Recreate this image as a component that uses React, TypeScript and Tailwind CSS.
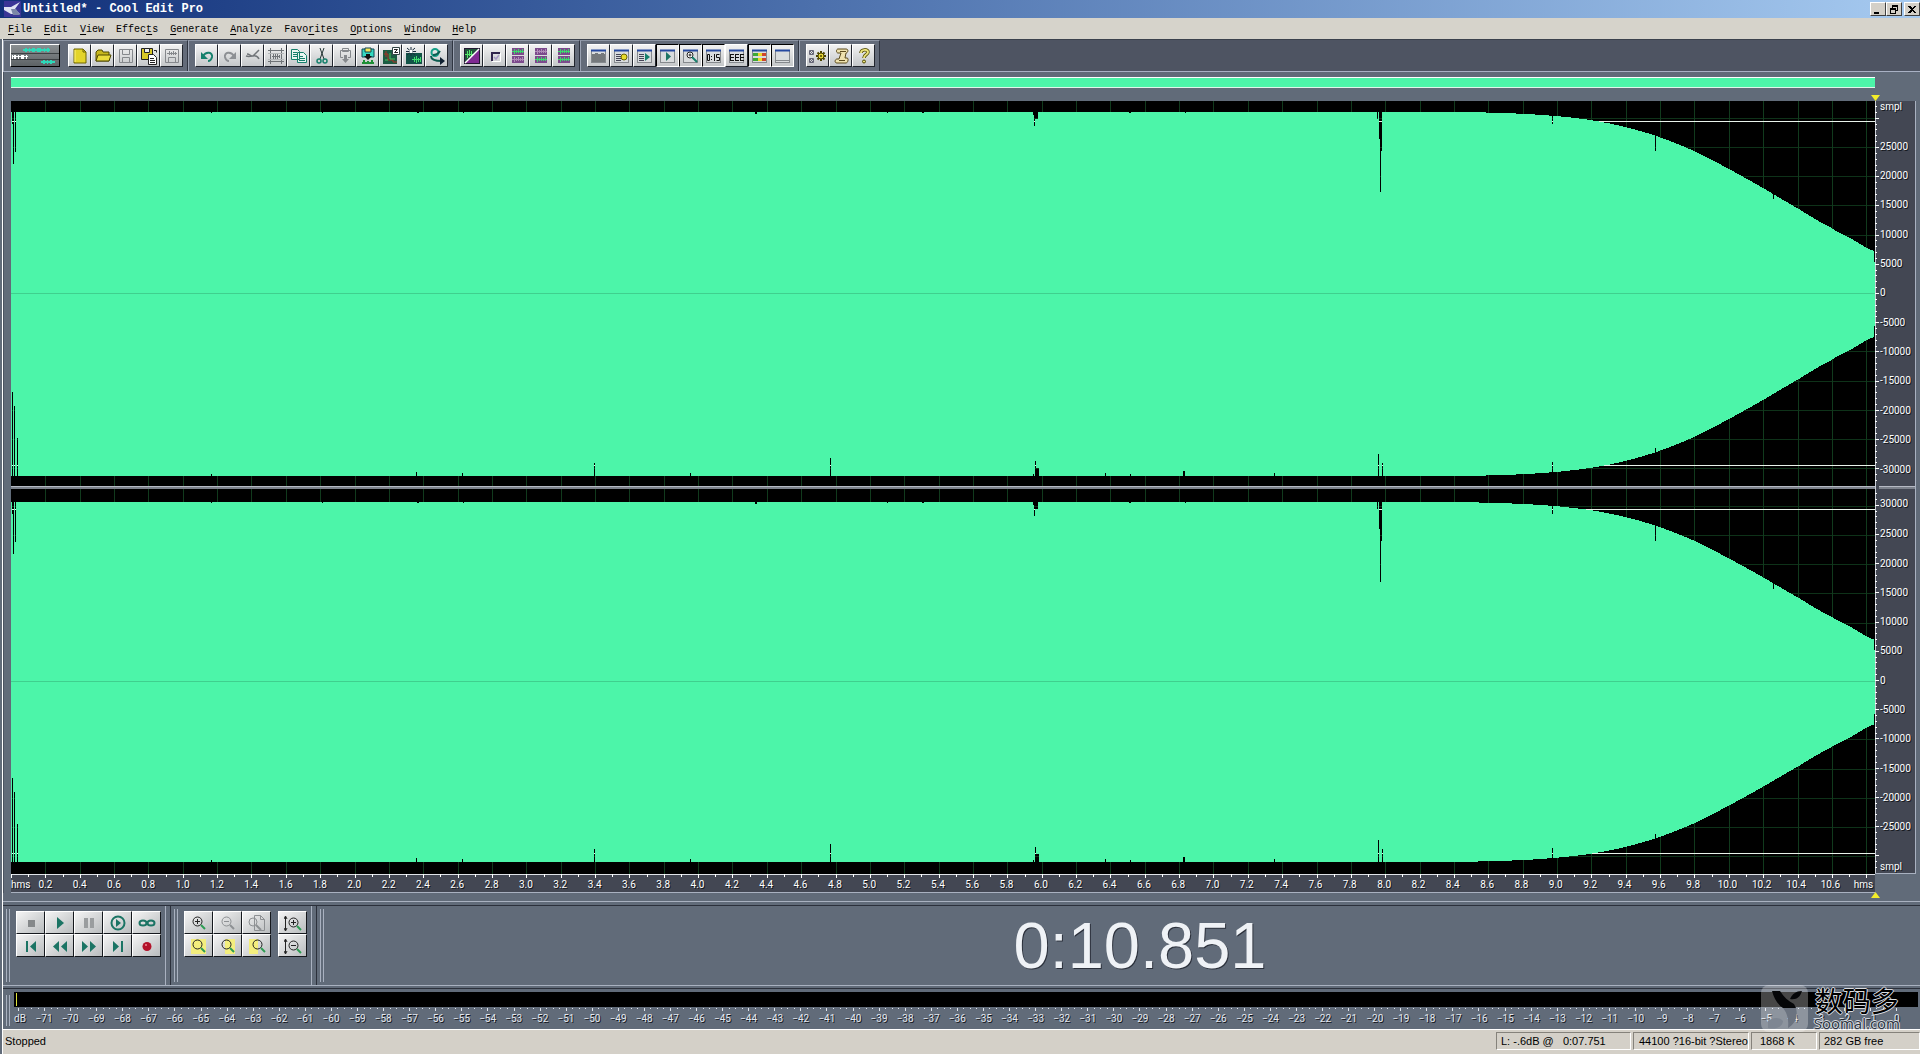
import type { ReactNode } from "react";
import clsx from "clsx";

const DURATION = 10.851;
const PLOT_W = 1864;
const PLOT_H = 773;
const PX_PER_SAMPLE = 29.2 / 5000;
const GREEN = "#4cf5a9";

const menus = [
  ["", "F", "ile"],
  ["", "E", "dit"],
  ["", "V", "iew"],
  ["Effec", "t", "s"],
  ["", "G", "enerate"],
  ["", "A", "nalyze"],
  ["Favo", "r", "ites"],
  ["", "O", "ptions"],
  ["", "W", "indow"],
  ["", "H", "elp"],
];

const Icon = ({ children }: { children: ReactNode }) => (
  <svg width="18" height="18" viewBox="0 0 18 18" fill="none" aria-hidden="true" className="shrink-0">
    {children}
  </svg>
);

/* ---------- toolbar icons ---------- */

const wave = (y: number, color: string) => (
  <path
    d={`M3 ${y}.5h12M5.5 ${y - 2}v5M7.5 ${y - 1}v3M9.5 ${y - 2}v4M11.5 ${y - 1}v3M13.5 ${y - 2}v4`}
    stroke={color}
  />
);

const pane = (
  <>
    <rect x="1.5" y="3.5" width="14" height="12" fill="#d9dcde" stroke="#85898d" />
    <path d="M1 3.5h15" stroke="#2448a0" strokeWidth="2" />
  </>
);

const splitWave = (top: string, bottom: string) => (
  <Icon>
    <rect x="3" y="1" width="12" height="7" fill="#7c4a8c" />
    <rect x="3" y="9" width="12" height="7" fill="#7c4a8c" />
    {wave(4, top)}
    {wave(12, bottom)}
  </Icon>
);

const icons: Record<string, ReactNode> = {
  "New": (
    <Icon>
      <path d="M3 2h9l3 3v11H3z" fill="#e3d42a" stroke="#6d6400" />
      <path d="M12 2v3h3" stroke="#6d6400" />
      <path d="M4 3v12" stroke="#fff27a" />
    </Icon>
  ),
  "Open": (
    <Icon>
      <path d="M2 14V5l2-2h4l1 2h6v9z" fill="#c8b81e" stroke="#4f4800" />
      <path d="M2 14l2-6h13l-2 6z" fill="#eadc3c" stroke="#4f4800" />
    </Icon>
  ),
  "Save": (
    <Icon>
      <path d="M2.500 2.500h13v13h-13z M5.500 2.500v5h7v-5 M5.500 15.500v-5h7v5" stroke="#85888c" />
    </Icon>
  ),
  "Save As": (
    <Icon>
      <path d="M1.500 1.500h11v11h-11z" fill="#d8c826" stroke="#222" />
      <path d="M4.500 1.500h5v4h-5z" fill="#eee" stroke="#222" />
      <path d="M8.500 7.500h5l3 3v7h-8z" fill="#fff" stroke="#222" />
      <path d="M10 11.500h4M10 13.500h5M10 15.500h5M14 3.500h2.500v2" stroke="#222" />
    </Icon>
  ),
  "Save Selection": (
    <Icon>
      <path d="M2.500 2.500h13v13h-13z M5.500 15.500v-5h7v5 M4 6.500h10 M6.500 4v4 M8.500 5v3 M10.500 4v4 M12.500 5v3" stroke="#85888c" />
    </Icon>
  ),
  "Undo": (
    <Icon>
      <path d="M5 9c3-5 10-4 9 1-.5 2-2 4-4 4" stroke="#16806c" strokeWidth="2" />
      <path d="M3 5v7h7z" fill="#16806c" />
    </Icon>
  ),
  "Redo": (
    <Icon>
      <path d="M13 9C10 4 3 5 4 10c.5 2 2 4 4 4" stroke="#8d9094" strokeWidth="2" />
      <path d="M15 5v7H8z" fill="#8d9094" />
    </Icon>
  ),
  "Repeat": (
    <Icon>
      <path d="M15 3L9 9c-3 0-3-2-6-2M9 9c3-1 5 1 6 3M2 9c3 1 4 0 7 0" stroke="#707478" strokeWidth="1.500" />
    </Icon>
  ),
  "Trim": (
    <Icon>
      <path d="M1 3.500h16M1 14.500h16M3.500 1v16M14.500 1v16M5 9.500h8M6.500 7v5M8.500 6v6M10.500 7v5M12.500 8v3" stroke="#6f7377" />
      <path d="M1 6.500h16M1 12.500h16" stroke="#b4b7b9" />
    </Icon>
  ),
  "Copy": (
    <Icon>
      <path d="M1.500 2.500h6l2 2v8h-8z M7.500 5.500h6l3 3v7h-9z" fill="#eaf6f2" stroke="#16806c" />
      <path d="M3 5.500h4M3 7.500h4M3 9.500h4M9 9.500h4M9 11.500h6M9 13.500h6" stroke="#16806c" />
    </Icon>
  ),
  "Cut": (
    <Icon>
      <path d="M7 1l4 11M11 1L7 12" stroke="#233" />
      <circle cx="6" cy="14" r="2" stroke="#16806c" strokeWidth="1.500" />
      <circle cx="12" cy="14" r="2" stroke="#16806c" strokeWidth="1.500" />
    </Icon>
  ),
  "Paste": (
    <Icon>
      <path d="M7 10.500H4.500v-7h10v7H12 M6.500 1.500h6v3h-6z" stroke="#85888c" />
      <path d="M8 8h3v4h2l-3.500 4L6 12h2z" fill="#85888c" />
    </Icon>
  ),
  "Paste to New": (
    <Icon>
      <path d="M3 2h12v8H3z" fill="#35d8c0" stroke="#145" />
      <path d="M6 1h6v4H6z" fill="#f3e657" stroke="#145" />
      <path d="M7 7h4v2h2l-4 4-4-4h2z" fill="#111" />
      <path d="M3 16h12M5 13v3M13 13v3M9 14v2" stroke="#1d8f35" strokeWidth="2" />
    </Icon>
  ),
  "Mix Paste": (
    <Icon>
      <rect x="1" y="3" width="14" height="14" fill="#1b5c43" />
      <path d="M2 7h4v6h5v2h4M4 4v6" stroke="#a73526" />
      <path d="M3 13h3M8 6v6h5" stroke="#46c35a" />
      <path d="M10.500.500h7v7h-7z" fill="#fff" stroke="#344" />
      <path d="M12 2.500h3.500l-3 3H16" stroke="#222" />
    </Icon>
  ),
  "Delete Silence": (
    <Icon>
      <rect x="1" y="6" width="16" height="11" fill="#125448" />
      <path d="M7 12.500h9M9.500 10v5M11.500 9v7M13.500 11v4M15.500 10v5" stroke="#3fe06d" />
      <path d="M6 0v9M1 4.500h10M2 1l8 7M10 1L2 8" stroke="#1b2d3c" />
      <path d="M4.500 4.500h3" stroke="#fff" strokeWidth="3" />
    </Icon>
  ),
  "Convert Sample Type": (
    <Icon>
      <circle cx="7" cy="5.500" r="3.500" stroke="#16a088" strokeWidth="2" />
      <path d="M5 8c3 0 5-1 7-4M3 9c0 3 3 5 11 5" stroke="#0d5c50" strokeWidth="2" />
      <path d="M12 10l5 4-5 4z" fill="#123" />
    </Icon>
  ),
  "Multitrack": (
    <Icon>
      <rect x="1.500" y="1.500" width="15" height="15" fill="#7f2a92" stroke="#231833" />
      <path d="M2 16V2h14z" fill="#20533a" />
      <path d="M2 7.500h9M4.500 4v7M6.500 3v6M8.500 4v5" stroke="#57e86c" />
      <path d="M2 16L16 2" stroke="#fff" strokeWidth="1.500" />
    </Icon>
  ),
  "Edit Mode": (
    <Icon>
      <path d="M6 14V6h8" stroke="#30254c" strokeWidth="2" />
      <path d="M6 14.500h8.500V6" stroke="#fff" />
      <path d="M8 10l2 2 3-4" stroke="#a99bc5" strokeWidth="1.500" />
    </Icon>
  ),
  "Edit Left": splitWave("#3bdc6c", "#b08bb8"),
  "Edit Right": splitWave("#b08bb8", "#3bdc6c"),
  "Edit Both": splitWave("#3bdc6c", "#3bdc6c"),
  "Organizer": (
    <Icon>
      {pane}
      <path d="M2 7h3V6h3v1h3V6h3v1h1v8H2z" fill="#75797c" />
    </Icon>
  ),
  "Cue List": (
    <Icon>
      {pane}
      <path d="M3 7.500h5M3 9.500h5M3 11.500h5M3 13.500h5" stroke="#445" />
      <circle cx="11" cy="10" r="3" fill="#e9dc2c" stroke="#6d6400" />
    </Icon>
  ),
  "Play List": (
    <Icon>
      {pane}
      <path d="M3 7.500h5M3 9.500h5M3 11.500h5M3 13.500h5" stroke="#445" />
      <path d="M9 6v8l5-4z" fill="#16806c" />
    </Icon>
  ),
  "Transport Controls": (
    <Icon>
      {pane}
      <path d="M7 5v9l5-4.500z" fill="#1b7464" />
    </Icon>
  ),
  "Zoom Controls": (
    <Icon>
      {pane}
      <circle cx="8" cy="8" r="3" fill="#fff" stroke="#222" />
      <path d="M10 10l5 5" stroke="#16806c" strokeWidth="2" />
      <path d="M6.500 8h3M8 6.500v3" stroke="#222" />
    </Icon>
  ),
  "Time Window": (
    <Icon>
      {pane}
      <path d="M2.500 7.500h2v6h-2z M6 9.500h1M6 12.500h1M9.500 7v7M14.500 7.500h-3v3h3v3h-3" stroke="#111" />
    </Icon>
  ),
  "Selection View": (
    <Icon>
      {pane}
      <path d="M2 7.500h4M2 10.500h4M2 13.500h4M2.500 7v6M7 7.500h4M7 10.500h4M7 13.500h4M7.500 7v6M12 7.500h4M12 10.500h4M12 13.500h4M12.500 7v6" stroke="#111" />
    </Icon>
  ),
  "Level Meters": (
    <Icon>
      {pane}
      <path d="M2 7.500h5M2 12.500h5" stroke="#3ea836" strokeWidth="3" />
      <path d="M7 7.500h4M7 12.500h4" stroke="#ecd92c" strokeWidth="3" />
      <path d="M11 7.500h4M11 12.500h4" stroke="#d0442c" strokeWidth="3" />
    </Icon>
  ),
  "Status Bar": (
    <Icon>
      {pane}
      <path d="M2 13.500h13" stroke="#85898d" />
    </Icon>
  ),
  "Settings": (
    <Icon>
      <path d="M.500 3.500h4v4h-4z M.500 11.500h4v4h-4z M1 4l3 3M4 4L1 7M1 12l3 3M4 12l-3 3" stroke="#667" />
      <path d="M12 4v10M7 9h10M8.500 5.500l7 7M15.500 5.500l-7 7" stroke="#4a4200" strokeWidth="2" />
      <circle cx="12" cy="9" r="3" fill="#e6d63a" stroke="#4a4200" />
      <circle cx="12" cy="9" r="1" fill="#4a4200" />
    </Icon>
  ),
  "Scripts": (
    <Icon>
      <path d="M6 2h8c3 0 2 4 0 4l-1 5h2c2 0 1 5-1 5H5c-3 0-2-4 0-4h2l2-6H6C4 6 4 2 6 2z" fill="#efe2ae" stroke="#5b4a1c" />
      <path d="M8 4.500h6M7 13.500h6" stroke="#5b4a1c" />
    </Icon>
  ),
  "Help": (
    <Icon>
      <path d="M6 6c0-4 7-4 7-1 0 3-4 2-4 6" stroke="#4f4800" strokeWidth="3.500" />
      <path d="M6 6c0-4 7-4 7-1 0 3-4 2-4 6" stroke="#ece47c" strokeWidth="2" />
      <circle cx="9" cy="14.500" r="1.500" fill="#ece47c" stroke="#4f4800" />
    </Icon>
  ),
};

const toolGroups = [
  ["New", "Open", "Save", "Save As", "Save Selection"],
  ["Undo", "Redo", "Repeat", "Trim", "Copy", "Cut", "Paste", "Paste to New", "Mix Paste", "Delete Silence", "Convert Sample Type"],
  ["Multitrack", "Edit Mode", "Edit Left", "Edit Right", "Edit Both"],
  ["Organizer", "Cue List", "Play List", "Transport Controls", "Zoom Controls", "Time Window", "Selection View", "Level Meters", "Status Bar"],
  ["Settings", "Scripts", "Help"],
];

const pressed = ["Transport Controls", "Zoom Controls", "Time Window", "Level Meters", "Status Bar"];

const ToolButton = ({ name }: { name: string }) => (
  <button
    type="button"
    aria-label={name}
    className={clsx(
      "flex size-[23px] items-center justify-center border bg-linear-to-b from-[#f2f2f2] to-[#c4c7c9]",
      pressed.includes(name)
        ? "border-t-black border-l-black border-r-white border-b-white"
        : "border-t-white border-l-white border-r-[#22262e] border-b-[#22262e]",
    )}
  >
    {icons[name]}
  </button>
);

const Toolbar = () => (
  <div className="flex h-[33px] border-t border-b border-t-[#3b414c] border-b-[#a9b1c4] bg-[#4e5462]">
    {toolGroups.map((group, i) => (
      <div
        key={group[0]}
        className="flex items-start border-t border-r border-l border-t-[#8d95a4] border-r-[#2f3541] border-l-[#9aa2b2] bg-[#636b79] pt-[3px] pr-1 pl-[6px]"
      >
        {i === 0 && (
          <button
            type="button"
            aria-label="Switch to multitrack view"
            className="mr-2 h-[23px] w-[50px] border border-t-white border-l-white border-r-black border-b-black bg-linear-to-b from-[#8b9093] to-[#5d6265]"
          >
            <svg width="48" height="21" viewBox="0 0 48 21" fill="none" shapeRendering="crispEdges">
              <path d="M0 8.500h48M0 14.500h48" stroke="#3c4144" />
              <path d="M12 5h27" stroke="#2ed7b8" strokeWidth="2" />
              <path d="M14 5h2M18 5h1M21 5h3M26 5h4M33 5h1M36 5h2" stroke="#2ed7b8" strokeWidth="4" />
              <path d="M1 11.500h16" stroke="#fff" strokeWidth="1" />
              <path d="M1 11.500h1M3 11.500h2M7 11.500h1M10 11.500h3M15 11.500h1" stroke="#fff" strokeWidth="4" />
              <path d="M30 17h14" stroke="#2ed7b8" strokeWidth="2" />
              <path d="M32 17h2M36 17h1M39 17h2" stroke="#2ed7b8" strokeWidth="4" />
            </svg>
          </button>
        )}
        {group.map((name) => (
          <ToolButton key={name} name={name} />
        ))}
      </div>
    ))}
  </div>
);

/* ---------- waveform ---------- */

// fade-out envelope as [x, amplitude] pairs
const envelope = [
  [1440, 182],
  [1475, 181.500],
  [1516, 180],
  [1550, 177.500],
  [1582, 173.500],
  [1614, 167],
  [1648, 157],
  [1683, 143],
  [1717, 125.500],
  [1752, 106],
  [1787, 85.500],
  [1819, 67],
  [1839, 56],
  [1863, 43],
];

// dropouts as [x, width, depth], measured from the flat edge of the wave
const topSpikes = [
  [1, 1, 12], [2, 1, 52], [4, 1, 40], [200, 1, 1], [311, 1, 1], [406, 2, 1], [452, 1, 1], [744, 2, 2],
  [876, 1, 1], [911, 2, 1], [1022, 1, 3], [1023, 1, 14], [1024, 3, 7], [1118, 2, 1], [1174, 1, 1],
  [1366, 1, 7], [1368, 3, 27], [1369, 2, 39], [1369, 1, 80], [1541, 1, 12], [1644, 1, 39], [1762, 1, 87],
];
const bottomSpikes = [
  [1, 1, 84], [3, 1, 70], [6, 1, 38], [200, 1, 2], [405, 1, 4], [451, 1, 3], [583, 1, 13], [679, 1, 3], [819, 1, 18],
  [1022, 1, 2], [1024, 1, 15], [1025, 3, 8], [1094, 1, 3], [1119, 1, 2], [1172, 2, 5], [1263, 1, 3],
  [1367, 1, 22], [1371, 1, 13], [1541, 1, 14], [1644, 1, 28],
];

const channels = [
  { zero: 192, mid: 193, scale: 1, lines: [20, 364] },
  { zero: 580, mid: 581, scale: 0.988, lines: [408, 752] },
];

// one vertical step per 3px, interpolated with a Catmull-Rom spline
const curve = envelope.slice(0, -1).flatMap(([x1, a1], i) => {
  const [, a0] = envelope[Math.max(i - 1, 0)];
  const [x2, a2] = envelope[i + 1];
  const [, a3] = envelope[Math.min(i + 2, envelope.length - 1)];
  const steps = Math.round((x2 - x1) / 3);
  return Array.from({ length: steps }, (_, s) => {
    const t = s / steps;
    const a =
      0.5 *
      (2 * a1 +
        (a2 - a0) * t +
        (2 * a0 - 5 * a1 + 4 * a2 - a3) * t * t +
        (3 * a1 - a0 - 3 * a2 + a3) * t * t * t);
    return [x1 + (x2 - x1) * t, a];
  });
});
const outline = [[0, 182], ...curve, [1863, 43], [1863, 32], [1864, 32]];

const wavePoints = (mid: number, scale: number) =>
  [
    ...outline.map(([x, a]) => `${x},${mid - a * scale}`),
    ...[...outline].reverse().map(([x, a]) => `${x},${mid + a * scale}`),
  ].join(" ");

const seconds = (n: number) => (n / DURATION) * PLOT_W;

const Plot = () => (
  <svg
    role="img"
    aria-label="Stereo waveform"
    viewBox={`0 0 ${PLOT_W} ${PLOT_H}`}
    preserveAspectRatio="none"
    shapeRendering="crispEdges"
    className="h-full w-full bg-black"
  >
    {channels.map((c) =>
      [-6, -5, -4, -3, -2, -1, 1, 2, 3, 4, 5, 6].map((n) => (
        <rect key={`${c.zero}/${n}`} x="0" y={Math.round(c.zero + n * 5000 * PX_PER_SAMPLE)} width={PLOT_W} height="1" fill="#0e3219" />
      )),
    )}
    {Array.from({ length: 54 }, (_, i) => (
      <rect key={i} x={Math.round(seconds((i + 1) * 0.2))} y="0" width="1" height={PLOT_H} fill="#113a1d" />
    ))}
    {channels.map((c) => (
      <g key={c.zero}>
        <mask id={`drop-${c.zero}`} maskUnits="userSpaceOnUse" x="0" y="0" width={PLOT_W} height={PLOT_H}>
          <rect width={PLOT_W} height={PLOT_H} fill="#fff" />
          {topSpikes.map(([x, w, d]) => (
            <rect key={x + "-" + d} x={x} y={c.mid - 183 * c.scale} width={w} height={d + 1} fill="#000" />
          ))}
          {bottomSpikes.map(([x, w, d]) => (
            <rect key={x + "-" + d} x={x} y={c.mid + 182 * c.scale - d} width={w} height={d + 1} fill="#000" />
          ))}
        </mask>
        {c.lines.map((y) => (
          <rect key={y} x="0" y={y} width={PLOT_W} height="1" fill="#e8f2ea" />
        ))}
        <polygon points={wavePoints(c.mid, c.scale)} fill={GREEN} mask={`url(#drop-${c.zero})`} />
        <rect x="0" y={c.zero} width={PLOT_W} height="1" fill="#3fd08e" />
      </g>
    ))}
    <rect x="0" y="385" width={PLOT_W} height="3" fill="#7d828c" />
    <rect x="0" y="385" width={PLOT_W} height="1" fill="#b6bac4" />
  </svg>
);

const AxisTicks = () => (
  <svg width="4" viewBox={`0 0 4 ${PLOT_H}`} preserveAspectRatio="none" shapeRendering="crispEdges" className="h-full shrink-0">
    <rect width="1" height={PLOT_H} fill="#c9cdd6" />
    {channels.map((c) =>
      Array.from({ length: 65 }, (_, i) => i - 32).map((n) => (
        <rect
          key={c.zero + "/" + n}
          x="0"
          y={Math.round(c.zero + n * 1000 * PX_PER_SAMPLE)}
          width={n % 5 === 0 ? 4 : 2}
          height="1"
          fill="#fff"
        />
      )),
    )}
  </svg>
);

const labelShadow = "[text-shadow:1px_1px_0_#14171d]";
const smallFont = "font-[Roboto,'Liberation_Sans',sans-serif] text-[10px] leading-3";

const amplitudes = [25000, 20000, 15000, 10000, 5000, 0, -5000, -10000, -15000, -20000, -25000];

const ChannelScale = ({ first, last }: { first: string; last: string }) => (
  <div className="flex flex-1 flex-col pl-px">
    <div className={clsx("flex min-h-0 flex-[106]", first === "smpl" ? "items-start" : "items-center")}>{first}</div>
    {amplitudes.map((a) => (
      <div key={a} className="flex min-h-0 flex-[100] items-center">
        {a}
      </div>
    ))}
    <div className={clsx("flex min-h-0 flex-[106]", last === "smpl" ? "items-end" : "items-center")}>{last}</div>
  </div>
);

const TimeRuler = () => (
  <div className="h-[19px] border-b border-[#a9b1c0] bg-[#434753]">
    <svg viewBox={`0 0 ${PLOT_W} 4`} preserveAspectRatio="none" shapeRendering="crispEdges" className="block h-1 w-full">
      <rect width={PLOT_W} height="1" fill="#dfe2e8" />
      {Array.from({ length: 109 }, (_, i) => (
        <rect key={i} x={Math.round(seconds(i / 10))} y="0" width="1" height={i % 2 ? 3 : 4} fill="#fff" />
      ))}
    </svg>
    <div className={clsx("flex pt-px text-white", smallFont, labelShadow)}>
      <span className="min-w-0 flex-[10]">hms</span>
      {Array.from({ length: 53 }, (_, i) => (
        <span key={i} className="flex min-w-0 flex-[20] justify-center">
          {((i + 1) * 0.2).toFixed(1)}
        </span>
      ))}
      <span className="flex min-w-0 flex-[15] justify-end pr-[2px]">hms</span>
    </div>
  </div>
);

/* ---------- transport + zoom ---------- */

const T = "#1b7464";
const lens = (color = "#222", handle = "#2c9c52") => (
  <>
    <circle cx="7.500" cy="7.500" r="4.500" stroke={color} />
    <path d="M11 11l4 4" stroke={handle} strokeWidth="2" />
  </>
);

const padIcons: Record<string, ReactNode> = {
  "Stop": <path d="M6 6h7v7H6z" fill="#85888a" />,
  "Play": <path d="M6 3v12l7-6z" fill={T} />,
  "Pause": <path d="M4 4h4v10H4zM10 4h4v10h-4z" fill="#9a9d9f" />,
  "Play to End": (
    <>
      <circle cx="9" cy="9" r="6.500" stroke={T} strokeWidth="2" />
      <path d="M7 5v8l5-4z" fill={T} />
    </>
  ),
  "Play Looped": (
    <>
      <ellipse cx="5" cy="9" rx="3.500" ry="2.500" stroke={T} strokeWidth="2" />
      <ellipse cx="13" cy="9" rx="3.500" ry="2.500" stroke={T} strokeWidth="2" />
    </>
  ),
  "Go to Beginning": <path d="M4 4h2v11H4zM14 4v11l-6-5.500z" fill={T} />,
  "Rewind": <path d="M8 4v11L2 9.500zM16 4v11l-6-5.500z" fill={T} />,
  "Fast Forward": <path d="M2 4v11l6-5.500zM10 4v11l6-5.500z" fill={T} />,
  "Go to End": <path d="M4 4v11l6-5.500zM12 4h2v11h-2z" fill={T} />,
  "Record": (
    <>
      <circle cx="9" cy="9.500" r="4.500" fill="#b3122a" />
      <circle cx="8" cy="8" r="1" fill="#f08a94" />
    </>
  ),
  "Zoom In": <>{lens()}<path d="M5 7.500h5M7.500 5v5" stroke="#222" /></>,
  "Zoom Out": <>{lens("#8d9093", "#8d9093")}<path d="M5 7.500h5" stroke="#8d9093" /></>,
  "Zoom Out Full": (
    <>
      <path d="M6.500 1.500h6l4 4v11h-10z M12.500 1.500v4h4" stroke="#8d9093" />
      <circle cx="5" cy="8" r="4" stroke="#8d9093" />
      <path d="M8 11l5 5" stroke="#8d9093" strokeWidth="2" />
    </>
  ),
  "Zoom to Selection": (
    <>
      <rect x="1" y="2" width="15" height="15" fill="#f3ee7d" />
      {lens()}
    </>
  ),
  "Zoom to Right Edge": (
    <>
      <rect x="6" y="2" width="10" height="15" fill="#f3ee7d" />
      {lens()}
    </>
  ),
  "Zoom to Left Edge": (
    <>
      <rect x="1" y="2" width="9" height="15" fill="#f3ee7d" />
      <g transform="translate(2 0)">{lens()}</g>
    </>
  ),
  "Zoom In Vertically": (
    <>
      <path d="M1.500 3v13M0 5l1.500-3L3 5M0 14l1.500 3L3 14" stroke="#222" />
      <g transform="translate(2 1)">{lens()}<path d="M5 7.500h5M7.500 5v5" stroke="#222" /></g>
    </>
  ),
  "Zoom Out Vertically": (
    <>
      <path d="M1.500 3v13M0 5l1.500-3L3 5M0 14l1.500 3L3 14" stroke="#222" />
      <g transform="translate(2 1)">{lens()}<path d="M5 7.500h5" stroke="#222" /></g>
    </>
  ),
};

const PadButton = ({ name }: { name: string }) => (
  <button
    type="button"
    aria-label={name}
    className="flex h-[23px] w-[29px] items-center justify-center border border-t-white border-l-white border-r-[#15181d] border-b-[#15181d] bg-linear-to-br from-[#f4f4f4] to-[#b9bcbe]"
  >
    <Icon>{padIcons[name]}</Icon>
  </button>
);

const Gripper = () => (
  <div className="my-[3px] w-1 shrink-0 border-r border-l border-[#a9b1c0]" />
);

const Divider = () => (
  <div className="w-[6px] shrink-0 border-r border-l border-r-[#2b303b] border-l-[#a9b1c0]" />
);

const transport = [
  "Stop", "Play", "Pause", "Play to End", "Play Looped",
  "Go to Beginning", "Rewind", "Fast Forward", "Go to End", "Record",
];
const zoomPads = [
  "Zoom In", "Zoom Out", "Zoom Out Full",
  "Zoom to Selection", "Zoom to Right Edge", "Zoom to Left Edge",
];
const verticalPads = ["Zoom In Vertically", "Zoom Out Vertically"];

const ControlPanel = () => (
  <div className="flex h-[80px] border-t border-[#2b303b] pl-[3px]">
    <Gripper />
    <div className="grid grid-cols-[repeat(5,29px)] content-start pt-[5px] pr-1 pl-[6px]">
      {transport.map((n) => (
        <PadButton key={n} name={n} />
      ))}
    </div>
    <Divider />
    <div className="w-[3px]" />
    <Gripper />
    <div className="grid grid-cols-[repeat(3,29px)] content-start pt-[5px] pl-[6px]">
      {zoomPads.map((n) => (
        <PadButton key={n} name={n} />
      ))}
    </div>
    <div className="flex flex-col pt-[5px] pr-1 pl-[7px]">
      {verticalPads.map((n) => (
        <PadButton key={n} name={n} />
      ))}
    </div>
    <Divider />
    <div className="w-[3px]" />
    <Gripper />
    <div className="flex flex-1 items-center justify-center pl-9 font-['Liberation_Sans',Arial,sans-serif] text-[65px] leading-none text-[#eff2f6] [text-shadow:1px_1px_0_#2b303b]">
      0:10.851
    </div>
  </div>
);

const LevelMeter = () => (
  <div className="flex h-[40px] pt-[3px] pl-[3px]">
    <Gripper />
    <div className="flex-1 pr-[2px] pl-1">
      <div className="h-[15px] bg-black pt-px pl-[2px]">
        <div className="h-[13px] w-px bg-[#dfe33a]" />
      </div>
      <svg viewBox="0 0 1904 3" preserveAspectRatio="none" shapeRendering="crispEdges" className="mt-px block h-[3px] w-full">
        {Array.from({ length: 289 }, (_, i) => (
          <rect key={i} x={Math.round(4 + i * 6.52)} y="0" width="1" height={i % 4 === 0 ? 3 : 1} fill="#dfe4ec" />
        ))}
      </svg>
      <div className={clsx("flex pt-[2px] pr-2 text-[#e3e8f0]", smallFont, labelShadow)}>
        <span className="w-[17px]">dB</span>
        {Array.from({ length: 72 }, (_, i) => (
          <span key={i} className="flex min-w-0 flex-1 justify-center">
            {i === 71 ? "0" : `−${71 - i}`}
          </span>
        ))}
      </div>
    </div>
  </div>
);

const StatusCell = ({ children, className }: { children: ReactNode; className: string }) => (
  <div
    className={clsx(
      "flex items-center border border-t-[#85827b] border-l-[#85827b] border-r-white border-b-white whitespace-pre",
      className,
    )}
  >
    {children}
  </div>
);

const windowButtons = [
  { name: "Minimize", d: "M2 8h5v2H2z" },
  { name: "Restore", d: "M4 1h6v6H8V6h1V3H5v1H4zM2 4h6v6H2zM3 6v3h4V6z" },
  { name: "Close", d: "M2 2h2l2 2 2-2h2L7 5.500 10 9H8L6 7 4 9H2l3-3.500z" },
];

const Watermark = () => (
  <div className="absolute right-5 bottom-[21px] flex h-[48px] items-start gap-[6px]">
    <svg width="47" height="47" viewBox="0 0 47 47">
      <rect width="47" height="47" rx="8" fill="#fff" fillOpacity=".28" />
      <path d="M11 6h8c4 6 8 10 14 13l2 4H22C16 19 13 13 11 6z" fill="#050608" />
      <path d="M29 14c2-5 6-8 12-8-2 6-5 9-12 8z" fill="#050608" />
      <path d="M22 23h13c2 8 0 15-8 20 1-9-1-15-5-20z" fill="#6b7380" />
      <path d="M7 36c5-4 12-4 15 0 0 5-7 9-15 7z" fill="#7e8692" />
    </svg>
    <div className="flex flex-col items-center text-black [text-shadow:-1px_0_#d9dce0,1px_0_#d9dce0,0_-1px_#d9dce0,0_1px_#d9dce0]">
      <span className="font-['Noto_Sans_CJK_SC',sans-serif] text-[28px] leading-[30px]">数码多</span>
      <span className="font-['Open_Sans',sans-serif] text-[15px] leading-4 text-[#2c3340]">Soomal.com</span>
    </div>
  </div>
);

export default function App() {
  return (
    <div className="relative flex min-h-screen flex-col overflow-hidden bg-[#616b79] font-['Liberation_Sans',Arial,sans-serif] text-[11px] text-black select-none">
      <header className="flex h-[18px] items-center gap-[2px] bg-linear-to-r from-[#12307a] to-[#a6caf0] pl-1">
        <svg width="17" height="16" viewBox="0 0 17 16">
          <rect width="17" height="16" fill="#3a3596" />
          <path d="M0 6h7l9-5-5 7 5 5H7L0 9z" fill="#dfe3f2" />
          <path d="M7 8h5l4 6H9z" fill="#7a86a8" />
        </svg>
        <h1 className="font-['Liberation_Mono',monospace] text-[12px] leading-[18px] font-bold text-white">
          Untitled* - Cool Edit Pro
        </h1>
        <div className="ml-auto flex">
          {windowButtons.map((b) => (
            <button
              key={b.name}
              type="button"
              aria-label={b.name}
              className="flex h-[14px] w-4 items-center justify-center border border-t-white border-l-white border-r-[#404040] border-b-[#404040] bg-[#d4d0c8] last:ml-[2px]"
            >
              <svg width="12" height="11" viewBox="0 0 12 11" shapeRendering="crispEdges" className="shrink-0">
                <path d={b.d} fillRule="evenodd" />
              </svg>
            </button>
          ))}
        </div>
      </header>

      <nav className="flex h-[21px] items-center gap-3 bg-[#d6d3cb] pt-px pl-2 font-['Liberation_Mono',monospace] text-[10px]">
        {menus.map(([before, key, after]) => (
          <button key={before + key + after} type="button">
            {before}
            <u className="underline-offset-2">{key}</u>
            {after}
          </button>
        ))}
      </nav>

      <div className="flex flex-1 flex-col border-l-2 border-[#616b79]">
        <div className="flex flex-1 flex-col border-l border-white">
          <Toolbar />

          <main className="flex flex-1 flex-col border-l border-[#4b5361] pt-[5px] pl-[7px]">
            <div className="mr-[45px] h-[11px] border-t border-b border-t-white border-b-[#dff5ea] bg-[#4cf5a9]" />

            <div className="mt-[13px] flex min-h-[400px] flex-1">
              <div className="relative flex-1">
                <div className="absolute inset-0">
                  <Plot />
                </div>
              </div>
              <div className="relative mr-1 w-[41px] border-r border-b border-[#a9b1c0] bg-[#434753]">
                <svg width="9" height="6" viewBox="0 0 9 6" className="absolute -top-[6px] -left-1">
                  <path d="M0 0h9L4.500 6z" fill="#f4ee2a" />
                </svg>
                <div className="absolute inset-0 flex">
                  <AxisTicks />
                  <div className={clsx("flex flex-1 flex-col text-white", smallFont, labelShadow)}>
                    <ChannelScale first="smpl" last="-30000" />
                    <div className="h-[3px] border-t border-[#b6bac4] bg-[#7d828c]" />
                    <ChannelScale first="30000" last="smpl" />
                  </div>
                </div>
              </div>
            </div>

            <div className="relative mr-[45px]">
              <TimeRuler />
              <svg width="9" height="6" viewBox="0 0 9 6" className="absolute -right-[5px] -bottom-[5px]">
                <path d="M0 6h9L4.500 0z" fill="#f4ee2a" />
              </svg>
            </div>
          </main>

          <footer>
            <div className="mt-2 h-1 border-t border-[#a9b1c0]" />
            <ControlPanel />
            <div className="h-1 border-t border-b border-t-[#a9b1c0] border-b-[#2b303b]" />
            <LevelMeter />
            <div className="flex h-[25px] border-t border-white bg-[#d4d0c8] pt-[2px] pb-1 pl-[2px] text-[11px]">
              <span className="flex flex-1 items-center">Stopped</span>
              <div className="flex gap-[2px]">
                <StatusCell className="w-[135px] pl-1">{"L: -.6dB @   0:07.751"}</StatusCell>
                <StatusCell className="w-[116px] pl-[5px]">44100 ?16-bit ?Stereo</StatusCell>
                <StatusCell className="w-[66px] pl-2">1868 K</StatusCell>
                <StatusCell className="w-[101px] pl-1">282 GB free</StatusCell>
              </div>
            </div>
          </footer>
        </div>
      </div>
      <Watermark />
    </div>
  );
}
